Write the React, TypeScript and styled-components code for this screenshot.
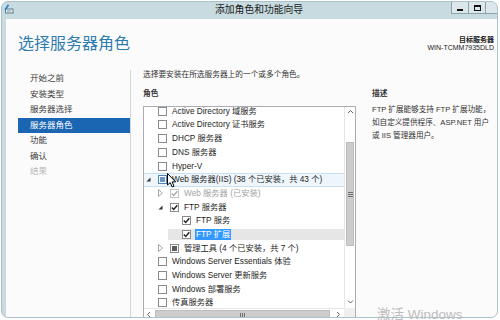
import React from 'react';
import styled, { createGlobalStyle } from 'styled-components';

const FONT = `"Liberation Sans", "Noto Sans CJK SC", sans-serif`;

const GlobalStyle = createGlobalStyle`
  html, body { margin: 0; padding: 0; background: #ffffff; }
  body { font-family: ${FONT}; overflow: hidden; }
  * { box-sizing: border-box; }
`;

/* ─── Data ─── */
type Item = {
  label: string;
  level: number;
  expander?: 'open' | 'closed';
  check: 'none' | 'checked' | 'mixed';
  hover?: boolean;
  selected?: boolean;
  disabled?: boolean;
};

const navItems = [
  { title: '开始之前' },
  { title: '安装类型' },
  { title: '服务器选择' },
  { title: '服务器角色', active: true },
  { title: '功能' },
  { title: '确认' },
  { title: '结果', disabled: true },
];

const roles: Item[] = [
  { label: 'Active Directory 域服务', level: 0, check: 'none' },
  { label: 'Active Directory 证书服务', level: 0, check: 'none' },
  { label: 'DHCP 服务器', level: 0, check: 'none' },
  { label: 'DNS 服务器', level: 0, check: 'none' },
  { label: 'Hyper-V', level: 0, check: 'none' },
  { label: 'Web 服务器(IIS) (38 个已安装，共 43 个)', level: 0, expander: 'open', check: 'mixed', hover: true },
  { label: 'Web 服务器 (已安装)', level: 1, expander: 'closed', check: 'checked', disabled: true },
  { label: 'FTP 服务器', level: 1, expander: 'open', check: 'checked' },
  { label: 'FTP 服务', level: 2, check: 'checked' },
  { label: 'FTP 扩展', level: 2, check: 'checked', selected: true },
  { label: '管理工具 (4 个已安装，共 7 个)', level: 1, expander: 'closed', check: 'mixed' },
  { label: 'Windows Server Essentials 体验', level: 0, check: 'none' },
  { label: 'Windows Server 更新服务', level: 0, check: 'none' },
  { label: 'Windows 部署服务', level: 0, check: 'none' },
  { label: '传真服务器', level: 0, check: 'none' },
];

/* ─── Window frame ─── */
const Page = styled.div`
  position: relative;
  width: 500px;
  height: 320px;
`;

const Window = styled.div`
  margin: 1px 0 0 1px;
  width: 497px;
  height: 317px;
  border: 1px solid #a9c2cc;
  border-radius: 7px;
  background: #c8dbe1;
  overflow: hidden;
  display: flex;
  flex-direction: column;
`;

const TitleBar = styled.div`
  height: 17px;
  flex: none;
  display: flex;
  align-items: flex-start;
`;

const AppIcon = styled.svg`
  margin: 2px 0 0 2px;
  flex: none;
`;

const Caption = styled.div`
  margin-left: 201px;
  font-size: 9.8px;
  line-height: 16px;
  color: #1b1b1b;
  white-space: nowrap;
`;

const WinButtons = styled.div`
  margin-left: auto;
  margin-right: -10px;
  display: flex;
  flex: none;
`;

const WinBtn = styled.div<{ $w?: number }>`
  width: ${(p) => p.$w ?? 18}px;
  height: 12px;
  margin-left: -1px;
  border: 1px solid #8da4ad;
  border-top: none;
  background: #dce7eb;
  display: flex;
  align-items: center;
  justify-content: center;
`;

const MinGlyph = styled.div`
  width: 6px;
  height: 2px;
  margin-top: 4px;
  background: #111;
`;

const MaxGlyph = styled.div`
  width: 7px;
  height: 6px;
  border: 1px solid #111;
  border-top-width: 2px;
`;

const Body = styled.div`
  flex: 1;
  min-height: 0;
  margin-left: 4px;
  background: #fbfbfb;
  display: flex;
  flex-direction: column;
`;

/* ─── Header ─── */
const Header = styled.div`
  height: 51px;
  flex: none;
  display: flex;
  justify-content: space-between;
`;

const PageTitle = styled.h1`
  margin: 0;
  padding: 15px 0 0 12px;
  font-size: 16px;
  line-height: 20px;
  font-weight: 400;
  color: #2c7cb0;
  white-space: nowrap;
`;

const Target = styled.div`
  padding: 17px 3px 0 0;
  text-align: right;
  font-size: 7px;
  line-height: 7.5px;
  color: #222;
`;

const TargetLabel = styled.div`
  font-weight: bold;
`;

/* ─── Content ─── */
const Content = styled.div`
  flex: 1;
  min-height: 0;
  display: flex;
`;

const Nav = styled.nav`
  width: 125px;
  flex: none;
  border-right: 1px solid #d6d6d6;
  padding: 1.25px 0 0 12px;
`;

const NavItem = styled.div<{ $active?: boolean; $disabled?: boolean }>`
  height: 15.5px;
  line-height: 15.5px;
  padding-left: 12px;
  font-size: 8.5px;
  white-space: nowrap;
  color: ${(p) => (p.$active ? '#ffffff' : p.$disabled ? '#b8b8b8' : '#3a3a3a')};
  background: ${(p) => (p.$active ? '#1a66b3' : 'transparent')};
`;

const Main = styled.div`
  flex: 1;
  min-width: 0;
  padding: 0 2px 0 12px;
  display: flex;
  flex-direction: column;
`;

const Instruction = styled.div`
  font-size: 7.7px;
  line-height: 10px;
  color: #333;
  white-space: nowrap;
`;

const Columns = styled.div`
  margin-top: 9px;
  display: flex;
  gap: 16px;
`;

const ListCol = styled.div`
  width: 213px;
  flex: none;
`;

const DescCol = styled.div`
  flex: 1;
  min-width: 0;
`;

const SectionHead = styled.div`
  font-size: 7.7px;
  line-height: 10px;
  font-weight: bold;
  color: #333;
`;

const DescText = styled.div`
  margin-top: 3.5px;
  font-size: 7.6px;
  line-height: 13px;
  color: #333;
  white-space: nowrap;
`;

/* ─── Tree list ─── */
const ListBox = styled.div`
  margin-top: 7px;
  height: 214px;
  border: 1px solid #abadb3;
  background: #ffffff;
  display: grid;
  grid-template-columns: 1fr 11px;
  grid-template-rows: 1fr 11px;
`;

const RowsArea = styled.div`
  overflow: hidden;
  min-width: 0;
`;

const Rows = styled.div`
  margin-top: -2.6px;
`;

const Row = styled.div<{ $hover?: boolean }>`
  height: 13.7px;
  display: flex;
  font-size: 8.25px;
  white-space: nowrap;
  background: ${(p) => (p.$hover ? '#eef6fc' : 'transparent')};
  border-top: 1px solid ${(p) => (p.$hover ? '#c9e0f3' : 'transparent')};
  border-bottom: 1px solid ${(p) => (p.$hover ? '#c9e0f3' : 'transparent')};
`;

const Indent = styled.div<{ $level: number }>`
  width: ${(p) => p.$level * 12}px;
  flex: none;
`;

const ItemHead = styled.div<{ $selected?: boolean }>`
  flex: 1;
  display: flex;
  align-items: center;
  background: ${(p) => (p.$selected ? '#e6e6e6' : 'transparent')};
`;

const Expander = styled.div`
  width: 14px;
  flex: none;
  padding-left: 2px;
  display: flex;
  align-items: center;
`;

const Box = styled.div<{ $hover?: boolean; $disabled?: boolean }>`
  width: 9px;
  height: 9px;
  flex: none;
  margin-right: 5px;
  border: 1px solid ${(p) => (p.$hover ? '#4a86c0' : p.$disabled ? '#c4c4c4' : '#8a8a8a')};
  background: #fff;
  display: flex;
  align-items: center;
  justify-content: center;
`;

const Mixed = styled.div<{ $hover?: boolean }>`
  width: 5px;
  height: 5px;
  background: ${(p) => (p.$hover ? '#6f96c2' : '#5c5c5c')};
`;

const Label = styled.span<{ $selected?: boolean; $disabled?: boolean }>`
  line-height: 11px;
  padding: 0 1px;
  margin-left: -1px;
  color: ${(p) => (p.$selected ? '#ffffff' : p.$disabled ? '#a3a3a3' : '#1e1e1e')};
  background: ${(p) => (p.$selected ? '#3399ff' : 'transparent')};
`;

/* ─── Scrollbars ─── */
const VScroll = styled.div`
  border-left: 1px solid #e6e6e6;
  display: flex;
  flex-direction: column;
`;

const HScroll = styled.div`
  border-top: 1px solid #e6e6e6;
  display: flex;
`;

const ScrollBtn = styled.div`
  width: 11px;
  height: 11px;
  flex: none;
  display: flex;
  align-items: center;
  justify-content: center;
`;

const VTrack = styled.div`
  flex: 1;
  padding-top: 24px;
`;

const VThumb = styled.div`
  height: 104px;
  margin: 0 1px;
  background: #cdcdcd;
  border: 1px solid #bdbdbd;
  display: flex;
  align-items: center;
  justify-content: center;
`;

const HTrack = styled.div`
  flex: 1;
`;

const HThumb = styled.div`
  width: 175px;
  height: 100%;
  margin: 1px 0;
  background: #cdcdcd;
  border: 1px solid #bdbdbd;
  display: flex;
  align-items: center;
  justify-content: center;
`;

const Corner = styled.div`
  background: #f0f0f0;
`;

/* ─── Overlays ─── */
const Watermark = styled.div`
  position: absolute;
  left: 377px;
  top: 306px;
  font-size: 13.5px;
  line-height: 16px;
  color: #bdbdbd;
  white-space: nowrap;
`;

const Cursor = styled.svg`
  position: absolute;
  left: 167px;
  top: 172px;
`;

function Chevron({ dir }: { dir: 'up' | 'down' | 'left' | 'right' }) {
  const d = {
    up: 'M1 4 L3.5 1.5 L6 4',
    down: 'M1 1.5 L3.5 4 L6 1.5',
    left: 'M4 1 L1.5 3.5 L4 6',
    right: 'M2 1 L4.5 3.5 L2 6',
  }[dir];
  return (
    <svg width="7" height="7" viewBox="0 0 7 7">
      <path d={d} fill="none" stroke="#606060" strokeWidth="1" />
    </svg>
  );
}

function Grip({ vertical }: { vertical?: boolean }) {
  return vertical ? (
    <svg width="5" height="5" viewBox="0 0 5 5">
      <path d="M0 0.5 H5 M0 2.5 H5 M0 4.5 H5" stroke="#707070" strokeWidth="1" />
    </svg>
  ) : (
    <svg width="5" height="5" viewBox="0 0 5 5">
      <path d="M0.5 0 V5 M2.5 0 V5 M4.5 0 V5" stroke="#707070" strokeWidth="1" />
    </svg>
  );
}

function TreeRow({ item }: { item: Item }) {
  return (
    <Row $hover={item.hover}>
      <Indent $level={item.level} />
      <ItemHead $selected={item.selected}>
        <Expander>
          {item.expander === 'open' && (
            <svg width="5" height="5" viewBox="0 0 5 5">
              <polygon points="4.5,0.5 4.5,4.5 0.5,4.5" fill="#333" />
            </svg>
          )}
          {item.expander === 'closed' && (
            <svg width="5" height="8" viewBox="0 0 5 8">
              <polygon points="0.5,0.5 4.5,4 0.5,7.5" fill="none" stroke="#a6a6a6" strokeWidth="1" />
            </svg>
          )}
        </Expander>
        <Box $hover={item.hover} $disabled={item.disabled}>
          {item.check === 'mixed' && <Mixed $hover={item.hover} />}
          {item.check === 'checked' && (
            <svg width="7" height="7" viewBox="0 0 7 7">
              <path
                d="M0.8 3.6 L2.7 5.5 L6.3 1.2"
                fill="none"
                stroke={item.disabled ? '#a8a8a8' : '#1f1f1f'}
                strokeWidth="1.4"
              />
            </svg>
          )}
        </Box>
        <Label $selected={item.selected} $disabled={item.disabled}>
          {item.label}
        </Label>
      </ItemHead>
    </Row>
  );
}

export default function App() {
  return (
    <Page>
      <GlobalStyle />
      <Window>
        <TitleBar>
          <AppIcon width="10" height="10" viewBox="0 0 10 10">
            <rect x="1.5" y="5" width="7.5" height="4" fill="#eef2f4" stroke="#5d7c90" strokeWidth="1" />
            <path d="M1 6 L4.5 0.8" stroke="#2e7fc8" strokeWidth="1.6" />
            <rect x="3" y="6.5" width="4" height="1" fill="#7a96a8" />
          </AppIcon>
          <Caption>添加角色和功能向导</Caption>
          <WinButtons>
            <WinBtn>
              <MinGlyph />
            </WinBtn>
            <WinBtn>
              <MaxGlyph />
            </WinBtn>
            <WinBtn $w={22} />
          </WinButtons>
        </TitleBar>

        <Body>
          <Header>
            <PageTitle>选择服务器角色</PageTitle>
            <Target>
              <TargetLabel>目标服务器</TargetLabel>
              <div>WIN-TCMM7935DLD</div>
            </Target>
          </Header>

          <Content>
            <Nav>
              {navItems.map((n) => (
                <NavItem key={n.title} $active={n.active} $disabled={n.disabled}>
                  {n.title}
                </NavItem>
              ))}
            </Nav>

            <Main>
              <Instruction>选择要安装在所选服务器上的一个或多个角色。</Instruction>
              <Columns>
                <ListCol>
                  <SectionHead>角色</SectionHead>
                  <ListBox>
                    <RowsArea>
                      <Rows>
                        {roles.map((r) => (
                          <TreeRow key={r.label} item={r} />
                        ))}
                      </Rows>
                    </RowsArea>
                    <VScroll>
                      <ScrollBtn>
                        <Chevron dir="up" />
                      </ScrollBtn>
                      <VTrack>
                        <VThumb>
                          <Grip vertical />
                        </VThumb>
                      </VTrack>
                      <ScrollBtn>
                        <Chevron dir="down" />
                      </ScrollBtn>
                    </VScroll>
                    <HScroll>
                      <ScrollBtn>
                        <Chevron dir="left" />
                      </ScrollBtn>
                      <HTrack>
                        <HThumb>
                          <Grip />
                        </HThumb>
                      </HTrack>
                      <ScrollBtn>
                        <Chevron dir="right" />
                      </ScrollBtn>
                    </HScroll>
                    <Corner />
                  </ListBox>
                </ListCol>

                <DescCol>
                  <SectionHead>描述</SectionHead>
                  <DescText>
                    FTP 扩展能够支持 FTP 扩展功能，
                    <br />
                    如自定义提供程序、ASP.NET 用户
                    <br />
                    或 IIS 管理器用户。
                  </DescText>
                </DescCol>
              </Columns>
            </Main>
          </Content>
        </Body>
      </Window>

      <Watermark>激活 Windows</Watermark>

      <Cursor width="11" height="15" viewBox="0 0 11 15">
        <path
          d="M0.5 0.5 L0.5 12 L3.2 9.6 L5.2 14 L7 13.2 L5.1 8.9 L8.6 8.9 Z"
          fill="#ffffff"
          stroke="#000000"
          strokeWidth="1"
          strokeLinejoin="round"
        />
      </Cursor>
    </Page>
  );
}
